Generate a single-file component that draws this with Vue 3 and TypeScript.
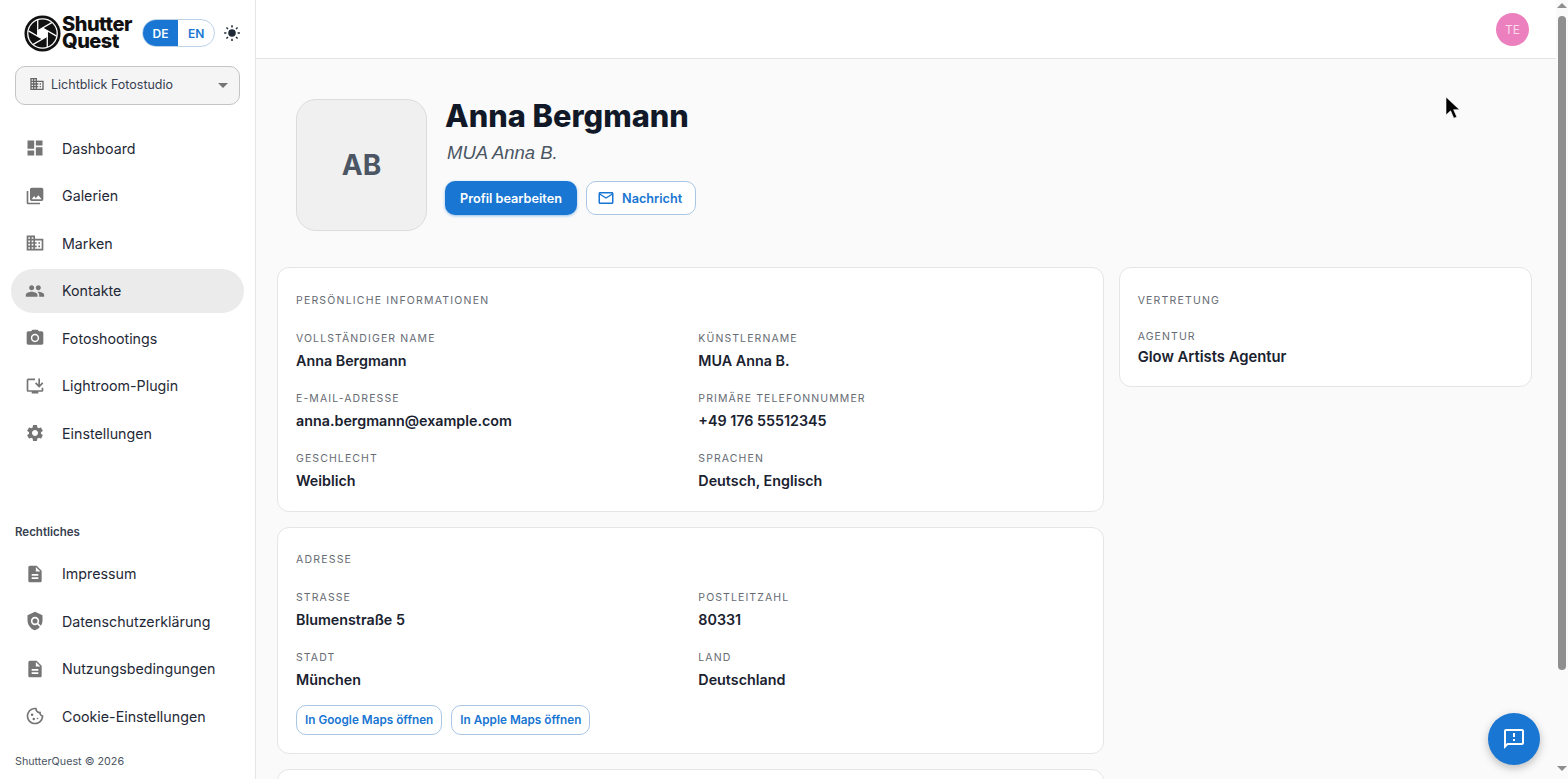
<template>
  <div class="app">
    <aside class="sidebar">
      <div class="brand-row">
        <div class="logo">
          <svg class="logo-mark" viewBox="0 0 40 40" aria-hidden="true">
            <circle cx="20" cy="20" r="19.5" fill="#111" />
            <circle cx="20" cy="20" r="16.6" fill="#fff" />
            <circle cx="20" cy="20" r="15.2" fill="#111" />
            <polygon points="20,14 25.200,17 25.200,23 20,26 14.800,23 14.800,17" fill="#fff" />
            <g fill="none" stroke="#fff" stroke-width="1.4">
              <path v-for="a in blades" :key="a" d="M20 14 L35.200 22.800" :transform="`rotate(${a} 20 20)`" />
            </g>
          </svg>
          <span class="logo-text">Shutter<br />Quest</span>
        </div>
        <div class="lang">
          <span class="lang-btn is-on">DE</span>
          <span class="lang-btn">EN</span>
        </div>
        <svg class="sun" viewBox="0 0 24 24" aria-hidden="true">
          <circle cx="12" cy="12" r="5" fill="#1f2937" />
          <path d="M12 1.500v3M12 19.500v3M1.500 12h3M19.500 12h3M4.600 4.600l2 2M17.400 17.400l2 2M4.600 19.400l2-2M17.400 6.600l2-2" stroke="#1f2937" stroke-width="2" fill="none" />
        </svg>
      </div>

      <div class="studio">
        <svg class="studio-icon" viewBox="0 0 24 24" aria-hidden="true"><path :d="icons.domain" /></svg>
        <span class="studio-name">Lichtblick Fotostudio</span>
        <span class="caret"></span>
      </div>

      <nav class="nav">
        <a v-for="item in mainNav" :key="item.label" class="nav-item" :class="{ 'is-active': item.active }">
          <svg class="nav-icon" viewBox="0 0 24 24" aria-hidden="true">
            <path :d="item.icon" />
            <circle v-for="(c, i) in item.circles" :key="i" :cx="c[0]" :cy="c[1]" :r="c[2]" />
          </svg>
          <span>{{ item.label }}</span>
        </a>
      </nav>

      <div class="legal-title">Rechtliches</div>
      <nav class="nav">
        <a v-for="item in legalNav" :key="item.label" class="nav-item">
          <svg class="nav-icon" viewBox="0 0 24 24" aria-hidden="true">
            <path :d="item.icon" />
            <circle v-for="(c, i) in item.circles" :key="i" :cx="c[0]" :cy="c[1]" :r="c[2]" />
          </svg>
          <span>{{ item.label }}</span>
        </a>
      </nav>
      <div class="copyright">ShutterQuest © 2026</div>
    </aside>

    <main class="main">
      <header class="topbar">
        <span class="user-avatar">TE</span>
      </header>

      <div class="content">
        <section class="profile">
          <div class="avatar">AB</div>
          <div class="profile-info">
            <h1>Anna Bergmann</h1>
            <p class="alias">MUA Anna B.</p>
            <div class="actions">
              <button type="button" class="btn-primary">Profil bearbeiten</button>
              <button type="button" class="btn-outline">
                <svg viewBox="0 0 24 24" aria-hidden="true"><path :d="icons.mail" /></svg>
                Nachricht
              </button>
            </div>
          </div>
        </section>

        <div class="columns">
          <div class="stack">
            <section v-for="card in cards" :key="card.title" class="card">
              <h2>{{ card.title }}</h2>
              <div class="fields">
                <div v-for="f in card.fields" :key="f.label" class="field">
                  <div class="field-label">{{ f.label }}</div>
                  <div class="field-value">{{ f.value }}</div>
                </div>
              </div>
              <div v-if="card.links" class="map-links">
                <a v-for="l in card.links" :key="l" class="map-link">{{ l }}</a>
              </div>
            </section>
            <section class="card card-cut"></section>
          </div>
          <aside>
            <section class="card card-side">
              <h2>Vertretung</h2>
              <div class="field-label">Agentur</div>
              <div class="field-value">Glow Artists Agentur</div>
            </section>
          </aside>
        </div>
      </div>
    </main>

    <div class="scrollbar" aria-hidden="true">
      <span class="arrow arrow-up"></span>
      <span class="thumb"></span>
      <span class="arrow arrow-down"></span>
    </div>

    <button type="button" class="fab" aria-label="Feedback">
      <svg viewBox="0 0 24 24" aria-hidden="true"><path :d="icons.feedback" /></svg>
    </button>

    <svg class="pointer" viewBox="0 0 16 24" aria-hidden="true">
      <path d="M1 1v18l4.600-4.200 3.200 7.400 3-1.300-3.200-7.200H14.500z" fill="#000" stroke="#fff" stroke-width="0.6" />
    </svg>
  </div>
</template>

<script setup lang="ts">
type Circle = [number, number, number]

interface NavItem {
  label: string
  icon: string
  circles?: Circle[]
  active?: boolean
}

interface Card {
  title: string
  fields: { label: string; value: string }[]
  links?: string[]
}

const blades = [0, 60, 120, 180, 240, 300]

const icons = {
  dashboard: 'M3 13h8V3H3v10zm0 8h8v-6H3v6zm10 0h8V11h-8v10zm0-18v6h8V3h-8z',
  gallery:
    'M22 16V4c0-1.100-.9-2-2-2H8c-1.100 0-2 .9-2 2v12c0 1.100.9 2 2 2h12c1.100 0 2-.9 2-2zm-11-4l2.030 2.710L16 11l4 5H8l3-4zM2 6v14c0 1.100.9 2 2 2h14v-2H4V6H2z',
  domain:
    'M12 7V3H2v18h20V7H12zM6 19H4v-2h2v2zm0-4H4v-2h2v2zm0-4H4V9h2v2zm0-4H4V5h2v2zm4 12H8v-2h2v2zm0-4H8v-2h2v2zm0-4H8V9h2v2zm0-4H8V5h2v2zm10 12h-8v-2h2v-2h-2v-2h2v-2h-2V9h8v10zm-2-8h-2v2h2v-2zm0 4h-2v2h2v-2z',
  people:
    'M16 11c1.660 0 2.990-1.340 2.990-3S17.660 5 16 5c-1.660 0-3 1.340-3 3s1.340 3 3 3zm-8 0c1.660 0 2.990-1.340 2.990-3S9.660 5 8 5C6.340 5 5 6.340 5 8s1.340 3 3 3zm0 2c-2.330 0-7 1.170-7 3.500V19h14v-2.500c0-2.330-4.670-3.500-7-3.500zm8 0c-.29 0-.62.02-.97.05 1.160.84 1.970 1.970 1.970 3.450V19h6v-2.500c0-2.330-4.670-3.500-7-3.500z',
  camera:
    'M9 2L7.170 4H4c-1.100 0-2 .9-2 2v12c0 1.100.9 2 2 2h16c1.100 0 2-.9 2-2V6c0-1.100-.9-2-2-2h-3.170L15 2H9zm3 15c-2.760 0-5-2.240-5-5s2.240-5 5-5 5 2.240 5 5-2.240 5-5 5z',
  install:
    'M20 17H4V5h8V3H4c-1.110 0-2 .89-2 2v12c0 1.100.89 2 2 2h4v2h8v-2h4c1.100 0 2-.9 2-2v-3h-2v3zM17 14l5-5-1.410-1.410L18 10.170V3h-2v7.170l-2.590-2.580L12 9z',
  settings:
    'M19.140 12.940c.04-.3.06-.61.06-.94 0-.32-.02-.64-.07-.94l2.030-1.580c.18-.14.23-.41.12-.61l-1.920-3.320c-.12-.22-.37-.29-.59-.22l-2.390.96c-.5-.38-1.030-.7-1.620-.94l-.36-2.540c-.04-.24-.24-.41-.48-.41h-3.840c-.24 0-.43.17-.47.41l-.36 2.540c-.59.24-1.130.57-1.620.94l-2.390-.96c-.22-.08-.47 0-.59.22L2.740 8.870c-.12.21-.08.47.12.61l2.030 1.580c-.05.3-.09.63-.09.94s.02.64.07.94l-2.030 1.580c-.18.14-.23.41-.12.61l1.920 3.320c.12.22.37.29.59.22l2.390-.96c.5.38 1.030.7 1.620.94l.36 2.540c.05.24.24.41.48.41h3.840c.24 0 .44-.17.47-.41l.36-2.540c.59-.24 1.130-.56 1.620-.94l2.390.96c.22.08.47 0 .59-.22l1.920-3.320c.12-.22.07-.47-.12-.61l-2.010-1.580zM12 15.600c-1.980 0-3.600-1.620-3.600-3.600s1.620-3.600 3.600-3.600 3.600 1.620 3.600 3.600-1.620 3.600-3.600 3.600z',
  description:
    'M14 2H6c-1.100 0-1.990.9-1.990 2L4 20c0 1.100.89 2 1.990 2H18c1.100 0 2-.9 2-2V8l-6-6zm2 16H8v-2h8v2zm0-4H8v-2h8v2zm-3-5V3.500L18.500 9H13z',
  policy:
    'M21 5l-9-4L3 5v6c0 5.550 3.840 10.740 9 12 2.300-.56 4.330-1.900 5.880-3.710l-3.120-3.120c-1.940 1.290-4.580 1.070-6.290-.64-1.950-1.950-1.950-5.120 0-7.070 1.950-1.950 5.120-1.950 7.070 0 1.710 1.710 1.920 4.350.64 6.290l2.900 2.900C20.290 15.690 21 13.380 21 11V5z',
  cookie:
    'M21.950 10.990c-1.790-.03-3.700-1.950-2.680-4.220-2.970 1-5.780-1.590-5.190-4.560C7.110.74 2 6.410 2 12c0 5.520 4.480 10 10 10 5.890 0 10.540-5.080 9.950-11.010zM12 20c-4.410 0-8-3.590-8-8 0-3.310 2.730-8.180 8.080-8.020.42 2.540 2.440 4.560 4.990 4.940.07.36.52 2.550 2.920 3.630C19.700 16.860 16.060 20 12 20z',
  mail: 'M20 4H4c-1.100 0-1.990.9-1.990 2L2 18c0 1.100.9 2 2 2h16c1.100 0 2-.9 2-2V6c0-1.100-.9-2-2-2zm0 14H4V8l8 5 8-5v10zm-8-7L4 6h16l-8 5z',
  feedback:
    'M20 2H4c-1.100 0-1.990.9-1.990 2L2 22l4-4h14c1.100 0 2-.9 2-2V4c0-1.100-.9-2-2-2zm0 14H5.170L4 17.170V4h16v12zM11 12h2v2h-2zm0-6h2v4h-2z',
}

const mainNav: NavItem[] = [
  { label: 'Dashboard', icon: icons.dashboard },
  { label: 'Galerien', icon: icons.gallery },
  { label: 'Marken', icon: icons.domain },
  { label: 'Kontakte', icon: icons.people, active: true },
  { label: 'Fotoshootings', icon: icons.camera, circles: [[12, 12, 3.2]] },
  { label: 'Lightroom-Plugin', icon: icons.install },
  { label: 'Einstellungen', icon: icons.settings },
]

const legalNav: NavItem[] = [
  { label: 'Impressum', icon: icons.description },
  { label: 'Datenschutzerklärung', icon: icons.policy, circles: [[12, 12, 3]] },
  { label: 'Nutzungsbedingungen', icon: icons.description },
  {
    label: 'Cookie-Einstellungen',
    icon: icons.cookie,
    circles: [
      [8.5, 10.5, 1.5],
      [10.5, 15.5, 1.5],
      [15, 15, 1],
    ],
  },
]

const cards: Card[] = [
  {
    title: 'Persönliche Informationen',
    fields: [
      { label: 'Vollständiger Name', value: 'Anna Bergmann' },
      { label: 'Künstlername', value: 'MUA Anna B.' },
      { label: 'E-Mail-Adresse', value: 'anna.bergmann@example.com' },
      { label: 'Primäre Telefonnummer', value: '+49 176 55512345' },
      { label: 'Geschlecht', value: 'Weiblich' },
      { label: 'Sprachen', value: 'Deutsch, Englisch' },
    ],
  },
  {
    title: 'Adresse',
    fields: [
      { label: 'Straße', value: 'Blumenstraße 5' },
      { label: 'Postleitzahl', value: '80331' },
      { label: 'Stadt', value: 'München' },
      { label: 'Land', value: 'Deutschland' },
    ],
    links: ['In Google Maps öffnen', 'In Apple Maps öffnen'],
  },
]
</script>

<style>
html,
body {
  margin: 0;
  height: 100%;
  overflow: hidden;
}
</style>

<style scoped>
.app {
  position: relative;
  display: flex;
  height: 100vh;
  overflow: hidden;
  background: #fafafa;
  color: #111827;
  font-family: Inter, "Liberation Sans", sans-serif;
}

.sidebar {
  flex: 0 0 256px;
  box-sizing: border-box;
  display: flex;
  flex-direction: column;
  background: #fff;
  border-right: 1px solid #e5e5e5;
  padding: 13px 11px 0;
}

.brand-row {
  display: flex;
  align-items: center;
  height: 40px;
  padding-left: 13px;
}

.logo {
  display: flex;
  align-items: center;
  gap: 1px;
}

.logo-mark {
  width: 37px;
  height: 37px;
}

.logo-text {
  font-size: 20px;
  font-weight: 800;
  line-height: 17px;
  letter-spacing: -0.5px;
  color: #111;
}

.lang {
  display: flex;
  width: 73px;
  height: 28px;
  box-sizing: border-box;
  margin-left: 10px;
  border: 1px solid #bcd3ea;
  border-radius: 14px;
  overflow: hidden;
  background: #fff;
}

.lang-btn {
  flex: 1;
  display: flex;
  align-items: center;
  justify-content: center;
  font-size: 12px;
  font-weight: 600;
  color: #1976d2;
}

.lang-btn.is-on {
  background: #1976d2;
  color: #fff;
}

.sun {
  width: 18px;
  height: 18px;
  margin-left: 8px;
}

.studio {
  display: flex;
  align-items: center;
  box-sizing: border-box;
  height: 39px;
  margin: 13px 4px 0;
  padding: 0 12px 3px;
  border: 1px solid #c4c4c4;
  border-radius: 10px;
  background: #f5f5f5;
}

.studio-icon {
  width: 16px;
  height: 16px;
  margin-left: 1px;
  fill: #666;
}

.studio-name {
  flex: 1;
  margin-left: 6px;
  font-size: 12.500px;
  color: #374151;
}

.caret {
  width: 0;
  height: 0;
  margin: 3px -1px 0 0;
  border-left: 5px solid transparent;
  border-right: 5px solid transparent;
  border-top: 5px solid #757575;
}

.nav {
  display: flex;
  flex-direction: column;
  gap: 3.500px;
  margin-top: 21px;
}

.nav-item {
  display: flex;
  align-items: center;
  height: 44px;
  padding-left: 14px;
  border-radius: 22px;
  font-size: 14.250px;
  color: #1f2937;
}

.nav-item.is-active {
  background: #ebebeb;
}

.nav-icon {
  flex: 0 0 20px;
  width: 20px;
  height: 20px;
  margin-right: 17px;
  fill: #757575;
}

.legal-title {
  margin: 69.700px 0 0 4px;
  font-size: 11.500px;
  font-weight: 600;
  line-height: 14px;
  color: #374151;
}

.legal-title + .nav {
  margin-top: 13px;
}

.copyright {
  margin: 16.500px 0 0 4px;
  font-size: 10.750px;
  line-height: 14px;
  color: #4b5563;
}

.main {
  flex: 1;
  min-width: 0;
  display: flex;
  flex-direction: column;
}

.topbar {
  flex: 0 0 59px;
  box-sizing: border-box;
  display: flex;
  align-items: flex-start;
  justify-content: flex-end;
  padding: 13px 27px 0 0;
  background: #fff;
  border-bottom: 1px solid #e5e5e5;
}

.user-avatar {
  display: flex;
  align-items: center;
  justify-content: center;
  width: 33px;
  height: 33px;
  border-radius: 50%;
  background: #ec7fbd;
  color: #fbdcec;
  font-size: 12px;
}

.content {
  flex: 1;
  min-height: 0;
  overflow: hidden;
  padding: 40px 24px 0 21px;
}

.profile {
  display: flex;
  gap: 18px;
  padding-left: 19px;
}

.avatar {
  flex: 0 0 131px;
  height: 132px;
  box-sizing: border-box;
  display: flex;
  align-items: center;
  justify-content: center;
  border: 1px solid #dcdcdc;
  border-radius: 20px;
  background: #f0f0f0;
  color: #4b5563;
  font-size: 28px;
  font-weight: 700;
}

.profile-info h1 {
  margin: 0;
  font-size: 30.750px;
  font-weight: 800;
  line-height: 34px;
  color: #111827;
}

.alias {
  margin: 10px 0 0 2px;
  font-family: "Liberation Sans", Arial, sans-serif;
  font-size: 18.500px;
  font-style: italic;
  line-height: 20px;
  color: #4b5563;
}

.actions {
  display: flex;
  gap: 9px;
  margin-top: 18px;
}

.actions button {
  height: 34px;
  font-family: inherit;
  font-size: 12.700px;
  font-weight: 600;
  border-radius: 10px;
}

.btn-primary {
  width: 132px;
  padding: 0;
  border: 0;
  background: #1976d2;
  color: #fff;
  box-shadow: 0 1px 3px rgba(25, 118, 210, 0.45);
}

.btn-outline {
  display: flex;
  align-items: center;
  gap: 7px;
  width: 110px;
  padding: 0 0 0 10px;
  border: 1px solid #a9c6e4;
  background: #fff;
  color: #1976d2;
}

.btn-outline svg {
  width: 18px;
  height: 18px;
  fill: #1976d2;
}

.columns {
  display: grid;
  grid-template-columns: 2fr 1fr;
  gap: 15px;
  align-items: start;
  margin-top: 36px;
}

.stack {
  display: flex;
  flex-direction: column;
  gap: 15px;
}

.card {
  box-sizing: border-box;
  padding: 26px 18px 0;
  background: #fff;
  border: 1px solid #e5e5e5;
  border-radius: 12px;
}

.card + .card {
  padding-top: 25px;
}

.card h2 {
  margin: 0;
  font-size: 10.500px;
  font-weight: 400;
  line-height: 13px;
  letter-spacing: 1.200px;
  text-transform: uppercase;
  color: #666b73;
}

.fields {
  display: grid;
  grid-template-columns: 1fr 1fr;
  row-gap: 21px;
  column-gap: 16px;
  margin-top: 25px;
  padding-bottom: 20px;
}

.field-label {
  font-size: 10.500px;
  line-height: 13px;
  letter-spacing: 1.100px;
  text-transform: uppercase;
  color: #666b73;
}

.field-value {
  margin-top: 6px;
  font-size: 14.300px;
  font-weight: 600;
  line-height: 20px;
  color: #1a2230;
}

.map-links {
  display: flex;
  gap: 9px;
  margin-top: -5px;
  padding-bottom: 17.500px;
}

.map-link {
  display: flex;
  align-items: center;
  height: 28px;
  padding: 0 8px;
  border: 1px solid #a9c6e4;
  border-radius: 10px;
  font-size: 11.750px;
  font-weight: 600;
  color: #1976d2;
}

.card-cut {
  height: 60px;
}

.card-side {
  height: 120px;
}

.card-side h2 {
  margin-bottom: 23px;
}

.card-side .field-value {
  margin-top: 4px;
  font-size: 14.800px;
}

.scrollbar {
  flex: 0 0 12px;
  display: flex;
  flex-direction: column;
  align-items: center;
  background: #fafafa;
}

.arrow {
  width: 0;
  height: 0;
  border-left: 5px solid transparent;
  border-right: 5px solid transparent;
}

.arrow-up {
  margin-top: 3px;
  border-bottom: 5px solid #8f8f8f;
}

.arrow-down {
  margin-top: 96px;
  border-top: 5px solid #8f8f8f;
}

.thumb {
  width: 8px;
  height: 654px;
  margin-top: 8px;
  border-radius: 4px;
  background: #8f8f8f;
}

.fab {
  position: absolute;
  right: 28px;
  bottom: 14px;
  width: 52px;
  height: 52px;
  display: flex;
  align-items: center;
  justify-content: center;
  padding: 0;
  border: 0;
  border-radius: 50%;
  background: #1976d2;
  box-shadow: 0 3px 8px rgba(0, 0, 0, 0.25);
}

.fab svg {
  width: 24px;
  height: 24px;
  fill: #fff;
}

.pointer {
  position: absolute;
  left: 1445px;
  top: 96px;
  width: 16px;
  height: 24px;
}
</style>
